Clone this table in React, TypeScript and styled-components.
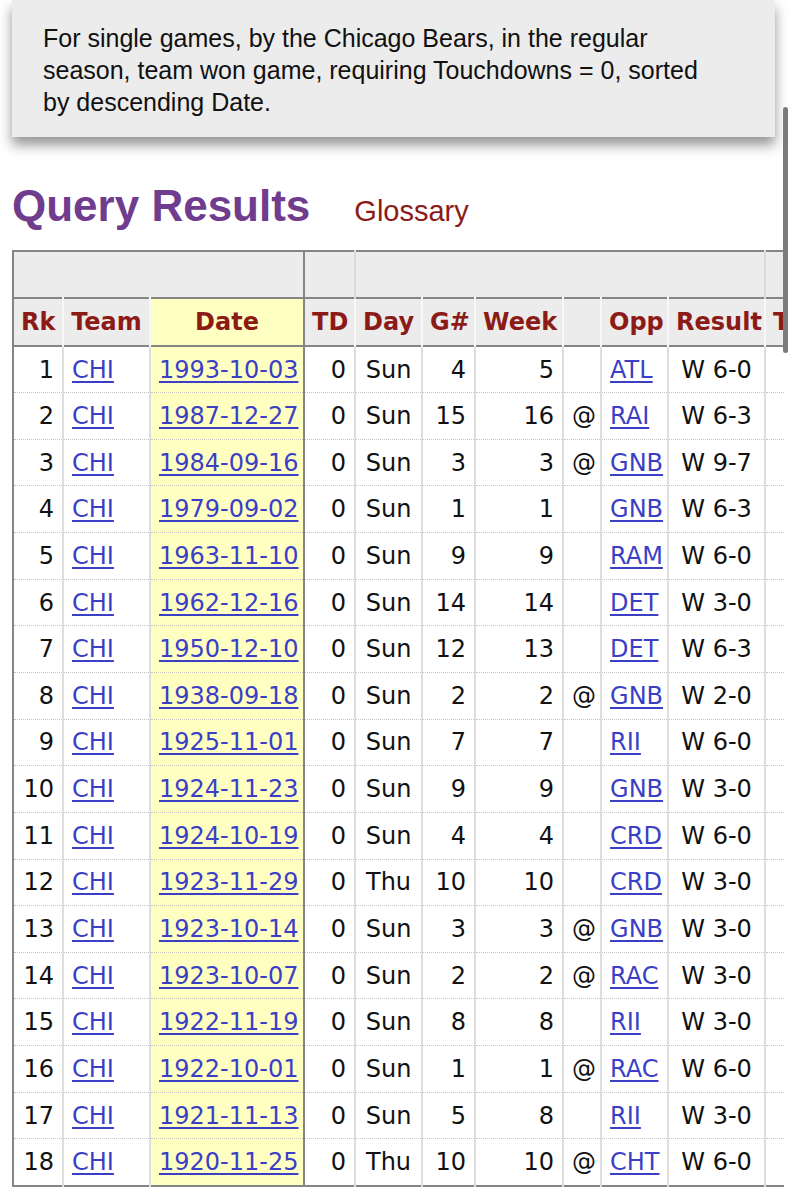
import React from "react";
import styled, { createGlobalStyle } from "styled-components";

const GlobalStyle = createGlobalStyle`
  html, body { margin: 0; padding: 0; background: #ffffff; overflow: hidden; }
  body { width: 795px; height: 1200px; }
`;

const Page = styled.div`
  width: 795px;
  height: 1200px;
  overflow: hidden;
  padding-left: 12px;
  box-sizing: border-box;
`;

const Caption = styled.div`
  width: 763px;
  height: 137px;
  box-sizing: border-box;
  padding: 22px 58px 0 31px;
  background: #ececec;
  box-shadow: 0 8px 12px rgba(0, 0, 0, 0.42);
  font-family: "Liberation Sans", Arial, sans-serif;
  font-size: 25px;
  line-height: 32px;
  color: #111;
`;

const TitleRow = styled.div`
  display: flex;
  align-items: baseline;
  gap: 44px;
  margin-top: 44px;
  height: 69px;
`;

const Title = styled.h1`
  margin: 0;
  font-family: "Liberation Sans", Arial, sans-serif;
  font-weight: 700;
  font-size: 44px;
  line-height: 50px;
  color: #703c8e;
`;

const GlossaryLink = styled.span`
  font-family: "Liberation Sans", Arial, sans-serif;
  font-size: 29px;
  color: #8c1b17;
`;

const TableClip = styled.div`
  width: 772px;
  overflow: hidden;
`;

const Table = styled.table`
  border-collapse: collapse;
  table-layout: fixed;
  width: 852px;
  font-family: "DejaVu Sans", Verdana, sans-serif;
  font-size: 24px;
  color: #111;
  border-left: 2px solid #858585;
  border-bottom: 2px solid #858585;
`;

const OverRow = styled.tr`
  height: 47px;
  background: #ececec;
  border-top: 2px solid #858585;
  border-bottom: 2px solid #858585;
`;

const OverCell = styled.th<{ $strong?: boolean }>`
  border-right: 2px solid ${(p) => (p.$strong ? "#858585" : "#dcdcdc")};
  padding: 0;
`;

const HeadRow = styled.tr`
  height: 48px;
  border-bottom: 2px solid #858585;
`;

const HeadCell = styled.th<{ $sorted?: boolean; $align?: string }>`
  background: ${(p) => (p.$sorted ? "#ffffc2" : "#ececec")};
  color: #8c1b17;
  font-weight: 700;
  text-align: ${(p) => p.$align || "center"};
  padding: 0 7px;
  white-space: nowrap;
  overflow: hidden;
  border-right: 2px solid #f8f8f8;
  ${(p) => (p.$sorted ? "border-left: 2px solid #858585; border-right: 2px solid #858585;" : "")}
`;

const BodyRow = styled.tr`
  height: 46.65px;
  border-bottom: 1px dotted #c4c4c4;
  &:last-child { border-bottom: 2px solid #858585; }
`;

const Cell = styled.td<{ $align?: "left" | "right" | "center"; $sorted?: boolean }>`
  padding: 0 8px;
  line-height: 28px;
  text-align: ${(p) => p.$align || "left"};
  white-space: nowrap;
  overflow: hidden;
  border-right: 2px solid #dedede;
  background: ${(p) => (p.$sorted ? "#ffffc2" : "transparent")};
  ${(p) => (p.$sorted ? "border-left: 2px solid #858585; border-right: 2px solid #858585;" : "")}
`;

const Link = styled.a`
  color: #3a3fc6;
  text-decoration: underline;
  text-underline-offset: 3px;
  text-decoration-thickness: 1.5px;
`;

const Scrollbar = styled.div`
  position: fixed;
  left: 783px;
  top: 107px;
  width: 5px;
  height: 246px;
  border-radius: 3px;
  background: #7b7b7b;
`;

type Row = [string, string, string, string, string, string, string];

const rows: Row[] = [
  ["1993-10-03", "Sun", "4", "5", "", "ATL", "W 6-0"],
  ["1987-12-27", "Sun", "15", "16", "@", "RAI", "W 6-3"],
  ["1984-09-16", "Sun", "3", "3", "@", "GNB", "W 9-7"],
  ["1979-09-02", "Sun", "1", "1", "", "GNB", "W 6-3"],
  ["1963-11-10", "Sun", "9", "9", "", "RAM", "W 6-0"],
  ["1962-12-16", "Sun", "14", "14", "", "DET", "W 3-0"],
  ["1950-12-10", "Sun", "12", "13", "", "DET", "W 6-3"],
  ["1938-09-18", "Sun", "2", "2", "@", "GNB", "W 2-0"],
  ["1925-11-01", "Sun", "7", "7", "", "RII", "W 6-0"],
  ["1924-11-23", "Sun", "9", "9", "", "GNB", "W 3-0"],
  ["1924-10-19", "Sun", "4", "4", "", "CRD", "W 6-0"],
  ["1923-11-29", "Thu", "10", "10", "", "CRD", "W 3-0"],
  ["1923-10-14", "Sun", "3", "3", "@", "GNB", "W 3-0"],
  ["1923-10-07", "Sun", "2", "2", "@", "RAC", "W 3-0"],
  ["1922-11-19", "Sun", "8", "8", "", "RII", "W 3-0"],
  ["1922-10-01", "Sun", "1", "1", "@", "RAC", "W 6-0"],
  ["1921-11-13", "Sun", "5", "8", "", "RII", "W 3-0"],
  ["1920-11-25", "Thu", "10", "10", "@", "CHT", "W 6-0"],
];

const widths = [50, 87, 154, 51, 67, 53, 88, 38, 67, 97, 100];

export default function App() {
  return (
    <>
      <GlobalStyle />
      <Page>
        <Caption>
          For single games, by the Chicago Bears, in the regular season, team won game, requiring
          Touchdowns = 0, sorted by descending Date.
        </Caption>
        <TitleRow>
          <Title>Query Results</Title>
          <GlossaryLink>Glossary</GlossaryLink>
        </TitleRow>
        <TableClip>
          <Table>
            <colgroup>
              {widths.map((w, i) => (
                <col key={i} style={{ width: w }} />
              ))}
            </colgroup>
            <thead>
              <OverRow>
                <OverCell colSpan={3} $strong />
                <OverCell />
                <OverCell colSpan={6} />
                <OverCell />
              </OverRow>
              <HeadRow>
                <HeadCell>Rk</HeadCell>
                <HeadCell>Team</HeadCell>
                <HeadCell $sorted>Date</HeadCell>
                <HeadCell>TD</HeadCell>
                <HeadCell>Day</HeadCell>
                <HeadCell>G#</HeadCell>
                <HeadCell>Week</HeadCell>
                <HeadCell></HeadCell>
                <HeadCell>Opp</HeadCell>
                <HeadCell>Result</HeadCell>
                <HeadCell $align="left">T</HeadCell>
              </HeadRow>
            </thead>
            <tbody>
              {rows.map((r, i) => (
                <BodyRow key={i}>
                  <Cell $align="right">{i + 1}</Cell>
                  <Cell>
                    <Link>CHI</Link>
                  </Cell>
                  <Cell $sorted $align="center">
                    <Link>{r[0]}</Link>
                  </Cell>
                  <Cell $align="right">0</Cell>
                  <Cell $align="center">{r[1]}</Cell>
                  <Cell $align="right">{r[2]}</Cell>
                  <Cell $align="right">{r[3]}</Cell>
                  <Cell $align="center">{r[4]}</Cell>
                  <Cell>
                    <Link>{r[5]}</Link>
                  </Cell>
                  <Cell $align="center">{r[6]}</Cell>
                  <Cell />
                </BodyRow>
              ))}
            </tbody>
          </Table>
        </TableClip>
        <Scrollbar />
      </Page>
    </>
  );
}
